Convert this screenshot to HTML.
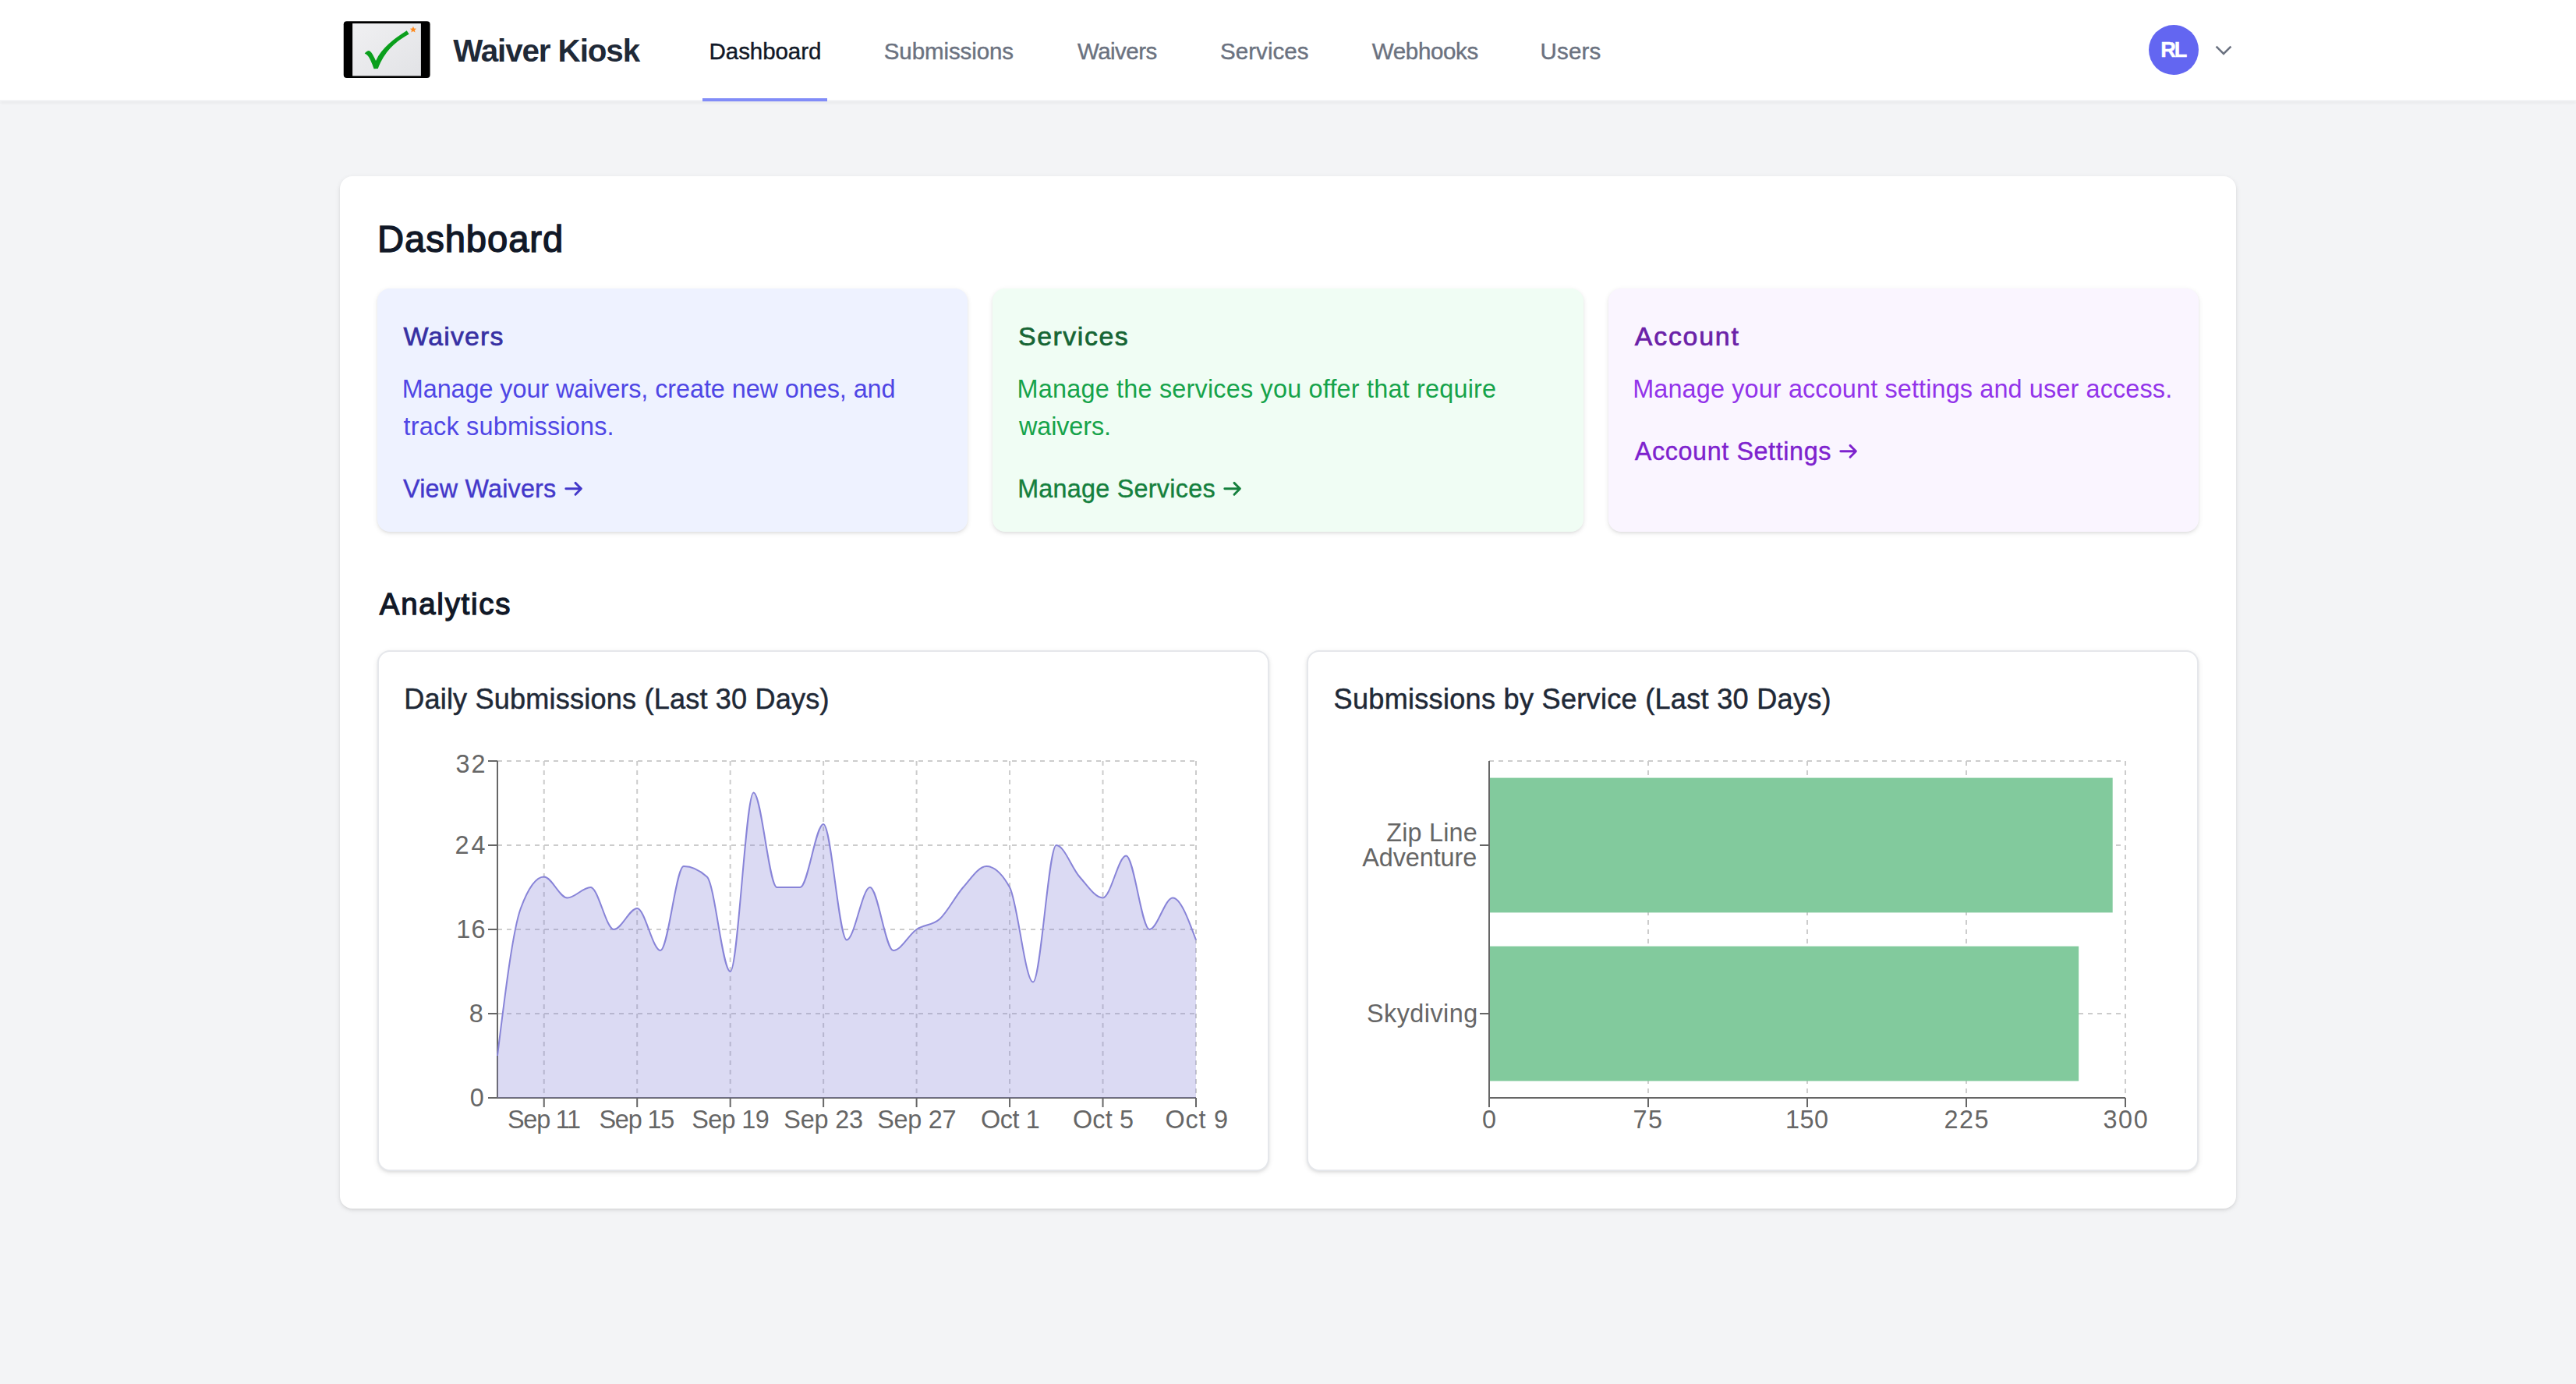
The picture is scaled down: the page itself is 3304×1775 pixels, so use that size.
<!DOCTYPE html>
<html lang="en"><head><meta charset="utf-8"><title>Waiver Kiosk - Dashboard</title>
<style>
@media (min-width:2400px){html{zoom:2}}
body{margin:0;width:1652px;height:887.5px;overflow:hidden;background:#f3f4f6;font-family:"Liberation Sans",sans-serif;position:relative}
.b{position:absolute;box-sizing:border-box}
.t{position:absolute;line-height:40px;white-space:nowrap}
.ov{position:absolute;left:0;top:0}
.logo{position:absolute;left:215px;top:10px}
.chev{position:absolute;left:1418px;top:24px}
</style></head><body>
<div class="b" style="left:0;top:0;width:1652px;height:65px;background:#fff;border-bottom:1px solid #f3f4f6;box-shadow:0 1px 2px 0 rgba(0,0,0,.05)"></div>
<div class="b" style="left:450.5px;top:63px;width:80px;height:2px;background:#818cf8"></div>
<svg class="logo" width="65" height="45" viewBox="0 0 1999 1384">
<defs><linearGradient id="lg" x1="0" y1="0" x2="1" y2="1"><stop offset="0" stop-color="#f0f0f2"/><stop offset="1" stop-color="#e2e3e6"/></linearGradient></defs>
<rect x="165" y="110" width="1705" height="1120" rx="62" fill="#000"/>
<rect x="340" y="155" width="1350" height="1035" fill="url(#lg)"/>
<path d="M580,745 C610,712 640,690 665,692 C705,700 745,770 800,890 C860,760 950,650 1050,560 C1170,450 1290,370 1410,295 L1455,365 C1320,440 1190,530 1090,640 C990,750 905,880 842,1045 L762,1050 C722,930 682,840 645,795 C625,772 605,757 580,745 Z" fill="#0a9f1c"/>
<path d="M1537,213 L1555,255 L1600,258 L1566,287 L1577,332 L1537,308 L1497,332 L1508,287 L1474,258 L1519,255 Z" fill="#ff8a1e"/>
</svg>
<div class="b" style="left:1378px;top:16px;width:32px;height:32px;border-radius:50%;background:#6366f1"></div>
<svg class="chev" width="16" height="16" viewBox="0 0 16 16"><polyline points="3.3,5.85 8,10.5 12.7,5.85" fill="none" stroke="#6b7280" stroke-width="1.3"/></svg>
<div class="b" style="left:218px;top:113px;width:1216px;height:662px;background:#fff;border-radius:8px;box-shadow:0 1px 3px 0 rgba(0,0,0,.1),0 1px 2px -1px rgba(0,0,0,.1)"></div>
<div class="b" style="left:242px;top:185px;width:378.67px;height:156px;background:#eef2ff;border-radius:8px;box-shadow:0 1px 3px 0 rgba(0,0,0,.1),0 1px 2px -1px rgba(0,0,0,.1)"></div>
<div class="b" style="left:636.67px;top:185px;width:378.67px;height:156px;background:#f0fdf4;border-radius:8px;box-shadow:0 1px 3px 0 rgba(0,0,0,.1),0 1px 2px -1px rgba(0,0,0,.1)"></div>
<div class="b" style="left:1031.33px;top:185px;width:378.67px;height:156px;background:#faf5ff;border-radius:8px;box-shadow:0 1px 3px 0 rgba(0,0,0,.1),0 1px 2px -1px rgba(0,0,0,.1)"></div>
<div class="b" style="left:242px;top:417px;width:572px;height:334px;background:#fff;border:1px solid #e5e7eb;border-radius:8px;box-shadow:0 1px 3px 0 rgba(0,0,0,.1),0 1px 2px -1px rgba(0,0,0,.1)"></div>
<div class="b" style="left:838px;top:417px;width:572px;height:334px;background:#fff;border:1px solid #e5e7eb;border-radius:8px;box-shadow:0 1px 3px 0 rgba(0,0,0,.1),0 1px 2px -1px rgba(0,0,0,.1)"></div>
<svg class="ov" width="1652" height="888" viewBox="0 0 1652 888"><g stroke="#ccc" stroke-dasharray="3 3" stroke-width="1"><line x1="319" y1="488.0" x2="767" y2="488.0"/><line x1="319" y1="542.0" x2="767" y2="542.0"/><line x1="319" y1="596.0" x2="767" y2="596.0"/><line x1="319" y1="650.0" x2="767" y2="650.0"/><line x1="348.867" y1="488" x2="348.867" y2="704"/><line x1="408.600" y1="488" x2="408.600" y2="704"/><line x1="468.333" y1="488" x2="468.333" y2="704"/><line x1="528.067" y1="488" x2="528.067" y2="704"/><line x1="587.800" y1="488" x2="587.800" y2="704"/><line x1="647.533" y1="488" x2="647.533" y2="704"/><line x1="707.267" y1="488" x2="707.267" y2="704"/><line x1="767.000" y1="488" x2="767.000" y2="704"/><line x1="1057.000" y1="488" x2="1057.000" y2="704"/><line x1="1159.000" y1="488" x2="1159.000" y2="704"/><line x1="1261.000" y1="488" x2="1261.000" y2="704"/><line x1="1363.000" y1="488" x2="1363.000" y2="704"/><line x1="955" y1="488" x2="1363" y2="488"/><line x1="955" y1="542" x2="1363" y2="542"/><line x1="955" y1="650" x2="1363" y2="650"/></g><rect x="955" y="498.8" width="399.840" height="86.4" fill="#82ca9d"/><rect x="955" y="606.8" width="378.080" height="86.4" fill="#82ca9d"/><g stroke="#666" stroke-width="1"><line x1="319" y1="704" x2="767" y2="704"/><line x1="319" y1="488" x2="319" y2="704"/><line x1="313" y1="704.0" x2="319" y2="704.0"/><line x1="313" y1="650.0" x2="319" y2="650.0"/><line x1="313" y1="596.0" x2="319" y2="596.0"/><line x1="313" y1="542.0" x2="319" y2="542.0"/><line x1="313" y1="488.0" x2="319" y2="488.0"/><line x1="348.867" y1="704" x2="348.867" y2="710"/><line x1="408.600" y1="704" x2="408.600" y2="710"/><line x1="468.333" y1="704" x2="468.333" y2="710"/><line x1="528.067" y1="704" x2="528.067" y2="710"/><line x1="587.800" y1="704" x2="587.800" y2="710"/><line x1="647.533" y1="704" x2="647.533" y2="710"/><line x1="707.267" y1="704" x2="707.267" y2="710"/><line x1="767.000" y1="704" x2="767.000" y2="710"/><line x1="955" y1="704" x2="1363" y2="704"/><line x1="955" y1="488" x2="955" y2="704"/><line x1="955.000" y1="704" x2="955.000" y2="710"/><line x1="1057.000" y1="704" x2="1057.000" y2="710"/><line x1="1159.000" y1="704" x2="1159.000" y2="710"/><line x1="1261.000" y1="704" x2="1261.000" y2="710"/><line x1="1363.000" y1="704" x2="1363.000" y2="710"/><line x1="949" y1="542" x2="955" y2="542"/><line x1="949" y1="650" x2="955" y2="650"/></g><path d="M319.000,677.000C323.978,636.500,328.956,596.000,333.933,582.500C338.911,569.000,343.889,562.250,348.867,562.250C353.844,562.250,358.822,575.750,363.800,575.750C368.778,575.750,373.756,569.000,378.733,569.000C383.711,569.000,388.689,596.000,393.667,596.000C398.644,596.000,403.622,582.500,408.600,582.500C413.578,582.500,418.556,609.500,423.533,609.500C428.511,609.500,433.489,555.500,438.467,555.500C443.444,555.500,448.422,557.750,453.400,562.250C458.378,566.750,463.356,623.000,468.333,623.000C473.311,623.000,478.289,508.250,483.267,508.250C488.244,508.250,493.222,569.000,498.200,569.000C503.178,569.000,508.156,569.000,513.133,569.000C518.111,569.000,523.089,528.500,528.067,528.500C533.044,528.500,538.022,602.750,543.000,602.750C547.978,602.750,552.956,569.000,557.933,569.000C562.911,569.000,567.889,609.500,572.867,609.500C577.844,609.500,582.822,599.375,587.800,596.000C592.778,592.625,597.756,593.750,602.733,589.250C607.711,584.750,612.689,574.625,617.667,569.000C622.644,563.375,627.622,555.500,632.600,555.500C637.578,555.500,642.556,560.000,647.533,569.000C652.511,578.000,657.489,629.750,662.467,629.750C667.444,629.750,672.422,542.000,677.400,542.000C682.378,542.000,687.356,556.625,692.333,562.250C697.311,567.875,702.289,575.750,707.267,575.750C712.244,575.750,717.222,548.750,722.200,548.750C727.178,548.750,732.156,596.000,737.133,596.000C742.111,596.000,747.089,575.750,752.067,575.750C757.044,575.750,762.022,589.250,767.000,602.750L767,704L319,704Z" fill="#8884d8" fill-opacity="0.3" stroke="none"/><path d="M319.000,677.000C323.978,636.500,328.956,596.000,333.933,582.500C338.911,569.000,343.889,562.250,348.867,562.250C353.844,562.250,358.822,575.750,363.800,575.750C368.778,575.750,373.756,569.000,378.733,569.000C383.711,569.000,388.689,596.000,393.667,596.000C398.644,596.000,403.622,582.500,408.600,582.500C413.578,582.500,418.556,609.500,423.533,609.500C428.511,609.500,433.489,555.500,438.467,555.500C443.444,555.500,448.422,557.750,453.400,562.250C458.378,566.750,463.356,623.000,468.333,623.000C473.311,623.000,478.289,508.250,483.267,508.250C488.244,508.250,493.222,569.000,498.200,569.000C503.178,569.000,508.156,569.000,513.133,569.000C518.111,569.000,523.089,528.500,528.067,528.500C533.044,528.500,538.022,602.750,543.000,602.750C547.978,602.750,552.956,569.000,557.933,569.000C562.911,569.000,567.889,609.500,572.867,609.500C577.844,609.500,582.822,599.375,587.800,596.000C592.778,592.625,597.756,593.750,602.733,589.250C607.711,584.750,612.689,574.625,617.667,569.000C622.644,563.375,627.622,555.500,632.600,555.500C637.578,555.500,642.556,560.000,647.533,569.000C652.511,578.000,657.489,629.750,662.467,629.750C667.444,629.750,672.422,542.000,677.400,542.000C682.378,542.000,687.356,556.625,692.333,562.250C697.311,567.875,702.289,575.750,707.267,575.750C712.244,575.750,717.222,548.750,722.200,548.750C727.178,548.750,732.156,596.000,737.133,596.000C742.111,596.000,747.089,575.750,752.067,575.750C757.044,575.750,762.022,589.250,767.000,602.750" fill="none" stroke="#8884d8" stroke-width="1"/></svg>
<div class="t" id="brand" style="left:290.60px;top:12.40px;font-size:20.2px;font-weight:700;letter-spacing:-0.555px;color:#1f2937;">Waiver Kiosk</div><div class="t" id="n1" style="left:454.80px;top:13.00px;font-size:14.75px;font-weight:400;letter-spacing:-0.038px;color:#111827;-webkit-text-stroke:0.2px currentColor;">Dashboard</div><div class="t" id="n2" style="left:566.90px;top:13.00px;font-size:14.75px;font-weight:400;letter-spacing:-0.050px;color:#6b7280;-webkit-text-stroke:0.2px currentColor;">Submissions</div><div class="t" id="n3" style="left:691.00px;top:13.00px;font-size:14.75px;font-weight:400;letter-spacing:-0.267px;color:#6b7280;-webkit-text-stroke:0.2px currentColor;">Waivers</div><div class="t" id="n4" style="left:782.50px;top:13.00px;font-size:14.75px;font-weight:400;letter-spacing:0.029px;color:#6b7280;-webkit-text-stroke:0.2px currentColor;">Services</div><div class="t" id="n5" style="left:879.90px;top:13.00px;font-size:14.75px;font-weight:400;letter-spacing:-0.171px;color:#6b7280;-webkit-text-stroke:0.2px currentColor;">Webhooks</div><div class="t" id="n6" style="left:987.80px;top:13.00px;font-size:14.75px;font-weight:400;letter-spacing:0.075px;color:#6b7280;-webkit-text-stroke:0.2px currentColor;">Users</div><div class="t" id="rl" style="left:1385.60px;top:12.00px;font-size:13.6px;font-weight:700;letter-spacing:-1.000px;color:#ffffff;-webkit-text-stroke:0.2px currentColor;">RL</div><div class="t" id="h1" style="left:242.00px;top:133.50px;font-size:23.6px;font-weight:400;letter-spacing:0.462px;color:#111827;-webkit-text-stroke:0.7px currentColor;">Dashboard</div><div class="t" id="t1" style="left:258.70px;top:195.50px;font-size:16.95px;font-weight:400;letter-spacing:0.583px;color:#3730a3;-webkit-text-stroke:0.35px currentColor;">Waivers</div><div class="t" id="d1a" style="left:257.90px;top:229.40px;font-size:16.2px;font-weight:400;letter-spacing:-0.035px;color:#4f46e5;">Manage your waivers, create new ones, and</div><div class="t" id="d1b" style="left:258.80px;top:253.40px;font-size:16.2px;font-weight:400;letter-spacing:0.106px;color:#4f46e5;">track submissions.</div><div class="t" id="l1" style="left:258.50px;top:293.40px;font-size:16.15px;font-weight:400;letter-spacing:0.109px;color:#4338ca;-webkit-text-stroke:0.2px currentColor;">View Waivers</div><div class="t" id="t2" style="left:653.00px;top:195.50px;font-size:16.95px;font-weight:400;letter-spacing:0.771px;color:#166534;-webkit-text-stroke:0.35px currentColor;">Services</div><div class="t" id="d2a" style="left:652.30px;top:229.40px;font-size:16.2px;font-weight:400;letter-spacing:0.102px;color:#16a34a;">Manage the services you offer that require</div><div class="t" id="d2b" style="left:653.50px;top:253.40px;font-size:16.2px;font-weight:400;letter-spacing:-0.057px;color:#16a34a;">waivers.</div><div class="t" id="l2" style="left:652.60px;top:293.40px;font-size:16.15px;font-weight:400;letter-spacing:0.136px;color:#15803d;-webkit-text-stroke:0.2px currentColor;">Manage Services</div><div class="t" id="t3" style="left:1048.40px;top:195.50px;font-size:16.95px;font-weight:400;letter-spacing:0.883px;color:#6b21a8;-webkit-text-stroke:0.35px currentColor;">Account</div><div class="t" id="d3a" style="left:1047.10px;top:229.40px;font-size:16.2px;font-weight:400;letter-spacing:0.068px;color:#9333ea;">Manage your account settings and user access.</div><div class="t" id="l3" style="left:1048.40px;top:269.40px;font-size:16.15px;font-weight:400;letter-spacing:0.307px;color:#7e22ce;-webkit-text-stroke:0.2px currentColor;">Account Settings</div><div class="t" id="h2" style="left:243.40px;top:367.40px;font-size:19.2px;font-weight:400;letter-spacing:0.875px;color:#111827;-webkit-text-stroke:0.65px currentColor;">Analytics</div><div class="t" id="c1" style="left:259.10px;top:428.40px;font-size:18.05px;font-weight:400;letter-spacing:0.097px;color:#1f2937;-webkit-text-stroke:0.25px currentColor;">Daily Submissions (Last 30 Days)</div><div class="t" id="c2" style="left:855.30px;top:428.40px;font-size:18.05px;font-weight:400;letter-spacing:0.144px;color:#1f2937;-webkit-text-stroke:0.25px currentColor;">Submissions by Service (Last 30 Days)</div><div class="t" id="x1" style="left:325.50px;top:697.90px;font-size:16.2px;font-weight:400;letter-spacing:-0.620px;color:#666666;">Sep 11</div><div class="t" id="x2" style="left:384.20px;top:697.90px;font-size:16.2px;font-weight:400;letter-spacing:-0.580px;color:#666666;">Sep 15</div><div class="t" id="x3" style="left:443.60px;top:697.90px;font-size:16.2px;font-weight:400;letter-spacing:-0.320px;color:#666666;">Sep 19</div><div class="t" id="x4" style="left:502.60px;top:697.90px;font-size:16.2px;font-weight:400;letter-spacing:-0.080px;color:#666666;">Sep 23</div><div class="t" id="x5" style="left:562.60px;top:697.90px;font-size:16.2px;font-weight:400;letter-spacing:-0.140px;color:#666666;">Sep 27</div><div class="t" id="x6" style="left:629.00px;top:697.90px;font-size:16.2px;font-weight:400;letter-spacing:-0.200px;color:#666666;">Oct 1</div><div class="t" id="x7" style="left:688.00px;top:697.90px;font-size:16.2px;font-weight:400;letter-spacing:0.075px;color:#666666;">Oct 5</div><div class="t" id="x8" style="left:747.20px;top:697.90px;font-size:16.2px;font-weight:400;letter-spacing:0.400px;color:#666666;">Oct 9</div><div class="t" id="y1" style="left:292.30px;top:469.85px;font-size:16.2px;font-weight:400;letter-spacing:1.000px;color:#666666;">32</div><div class="t" id="y2" style="left:291.80px;top:521.80px;font-size:16.2px;font-weight:400;letter-spacing:1.500px;color:#666666;">24</div><div class="t" id="y3" style="left:292.60px;top:575.90px;font-size:16.2px;font-weight:400;letter-spacing:0.700px;color:#666666;">16</div><div class="t" id="y4" style="left:300.90px;top:630.00px;font-size:16.2px;font-weight:400;letter-spacing:0.000px;color:#666666;">8</div><div class="t" id="y5" style="left:301.40px;top:684.00px;font-size:16.2px;font-weight:400;letter-spacing:0.000px;color:#666666;">0</div><div class="t" id="b1" style="left:950.50px;top:697.90px;font-size:16.2px;font-weight:400;letter-spacing:0.000px;color:#666666;">0</div><div class="t" id="b2" style="left:1047.20px;top:697.90px;font-size:16.2px;font-weight:400;letter-spacing:0.800px;color:#666666;">75</div><div class="t" id="b3" style="left:1145.00px;top:697.90px;font-size:16.2px;font-weight:400;letter-spacing:0.250px;color:#666666;">150</div><div class="t" id="b4" style="left:1246.70px;top:697.90px;font-size:16.2px;font-weight:400;letter-spacing:0.750px;color:#666666;">225</div><div class="t" id="b5" style="left:1348.70px;top:697.90px;font-size:16.2px;font-weight:400;letter-spacing:0.850px;color:#666666;">300</div><div class="t" id="z1" style="left:889.10px;top:513.90px;font-size:16.2px;font-weight:400;letter-spacing:0.100px;color:#666666;">Zip Line</div><div class="t" id="z2" style="left:873.60px;top:529.90px;font-size:16.2px;font-weight:400;letter-spacing:-0.038px;color:#666666;">Adventure</div><div class="t" id="z3" style="left:876.50px;top:629.85px;font-size:16.2px;font-weight:400;letter-spacing:0.225px;color:#666666;">Skydiving</div>
<svg class="arr" style="position:absolute;left:361.60px;top:306.40px" width="14" height="14" viewBox="0 0 14 14"><path d="M1.4 6.9H11.2M7.5 3.2L11.2 6.9L7.5 10.6" fill="none" stroke="#4338ca" stroke-width="1.45" stroke-linecap="round" stroke-linejoin="round"/></svg><svg class="arr" style="position:absolute;left:784.20px;top:306.40px" width="14" height="14" viewBox="0 0 14 14"><path d="M1.4 6.9H11.2M7.5 3.2L11.2 6.9L7.5 10.6" fill="none" stroke="#15803d" stroke-width="1.45" stroke-linecap="round" stroke-linejoin="round"/></svg><svg class="arr" style="position:absolute;left:1179.00px;top:282.40px" width="14" height="14" viewBox="0 0 14 14"><path d="M1.4 6.9H11.2M7.5 3.2L11.2 6.9L7.5 10.6" fill="none" stroke="#7e22ce" stroke-width="1.45" stroke-linecap="round" stroke-linejoin="round"/></svg>
</body></html>
